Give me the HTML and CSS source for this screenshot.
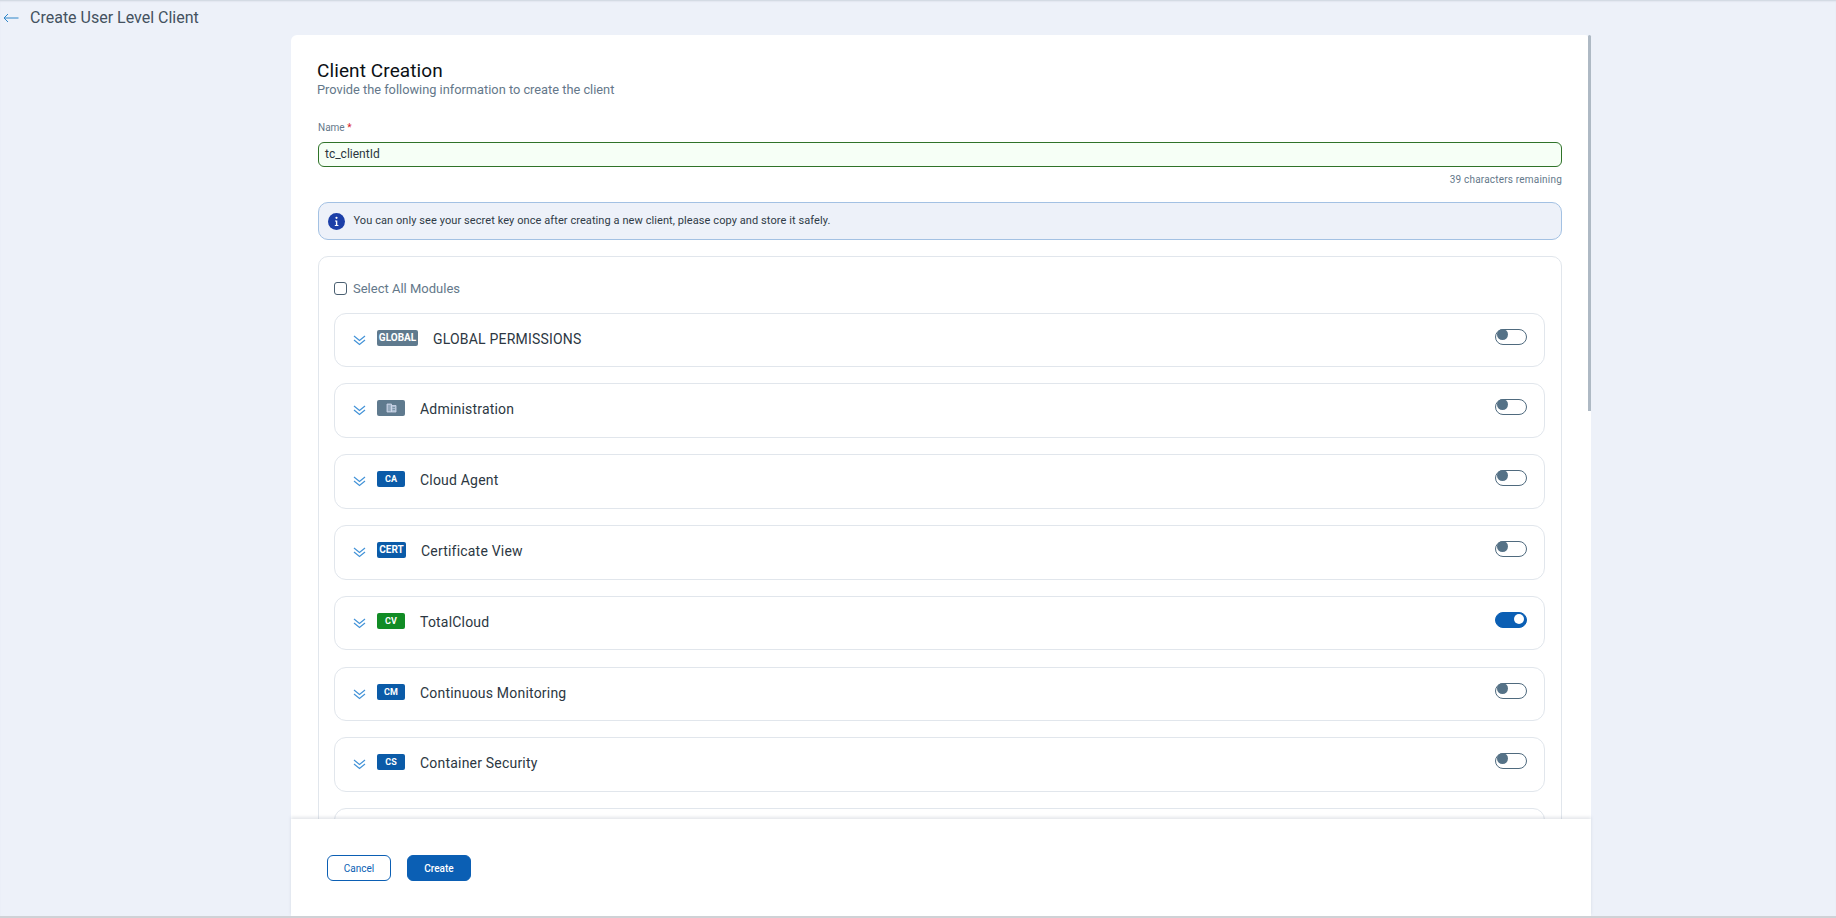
FILE: index.html
```html
<!DOCTYPE html>
<html lang="en">
<head>
<meta charset="utf-8">
<title>Create User Level Client</title>
<link rel="stylesheet" href="styles.css">
</head>
<body>
<div class="page">
  <header class="topbar">
    <svg class="back" width="16" height="10" viewBox="0 0 16 10"><path d="M15.500 5H1M5 1 1 5l4 4" fill="none" stroke="#2f86c9" stroke-width="1"/></svg>
    <span class="page-title">Create User Level Client</span>
  </header>
  <main class="card">
    <div class="scrollbar"></div>
    <div class="scroll">
      <h1 class="title">Client Creation</h1>
      <p class="subtitle">Provide the following information to create the client</p>
      <div class="field-label">Name <span class="req">*</span></div>
      <div class="input">tc_clientId</div>
      <div class="counter">39 characters remaining</div>
      <div class="info">
        <svg class="info-icon" width="17" height="17" viewBox="0 0 17 17"><circle cx="8.500" cy="8.500" r="8.500" fill="#1c3fa8"/><circle cx="8.500" cy="4.800" r="1.100" fill="#fff"/><path d="M7 7.400h2.300v4.600H10.400v1H6.800v-1h1.100V8.400H7z" fill="#fff"/></svg>
        <span class="info-text">You can only see your secret key once after creating a new client, please copy and store it safely.</span>
      </div>
      <section class="modules">
        <label class="select-all"><span class="checkbox"></span>Select All Modules</label>
        <div class="row">
          <svg class="chev" width="13" height="11" viewBox="0 0 13 11"><path d="M1 1l5.500 4.500L12 1M1 5l5.500 4.500L12 5" fill="none" stroke="#4393d8" stroke-width="1.200"/></svg>
          <span class="badge grey wide">GLOBAL</span>
          <span class="name name-wide">GLOBAL PERMISSIONS</span>
          <span class="toggle"></span>
        </div>
        <div class="row">
          <svg class="chev" width="13" height="11" viewBox="0 0 13 11"><path d="M1 1l5.500 4.500L12 1M1 5l5.500 4.500L12 5" fill="none" stroke="#4393d8" stroke-width="1.200"/></svg>
          <span class="badge grey"><svg width="11" height="10" viewBox="0 0 11 10"><path d="M1 1h4.500v8H1zM5.500 2.500H10V9H5.500z" fill="#a9bdd0" stroke="#cfd6ea" stroke-width=".8"/><path d="M2 3h2.500M2 5h2.500M2 7h2.500M6.500 4.500H9M6.500 6.500H9" stroke="#6a7f96" stroke-width=".7"/></svg></span>
          <span class="name">Administration</span>
          <span class="toggle"></span>
        </div>
        <div class="row">
          <svg class="chev" width="13" height="11" viewBox="0 0 13 11"><path d="M1 1l5.500 4.500L12 1M1 5l5.500 4.500L12 5" fill="none" stroke="#4393d8" stroke-width="1.200"/></svg>
          <span class="badge blue">CA</span>
          <span class="name">Cloud Agent</span>
          <span class="toggle"></span>
        </div>
        <div class="row">
          <svg class="chev" width="13" height="11" viewBox="0 0 13 11"><path d="M1 1l5.500 4.500L12 1M1 5l5.500 4.500L12 5" fill="none" stroke="#4393d8" stroke-width="1.200"/></svg>
          <span class="badge blue cert">CERT</span>
          <span class="name">Certificate View</span>
          <span class="toggle"></span>
        </div>
        <div class="row">
          <svg class="chev" width="13" height="11" viewBox="0 0 13 11"><path d="M1 1l5.500 4.500L12 1M1 5l5.500 4.500L12 5" fill="none" stroke="#4393d8" stroke-width="1.200"/></svg>
          <span class="badge green">CV</span>
          <span class="name">TotalCloud</span>
          <span class="toggle on"></span>
        </div>
        <div class="row">
          <svg class="chev" width="13" height="11" viewBox="0 0 13 11"><path d="M1 1l5.500 4.500L12 1M1 5l5.500 4.500L12 5" fill="none" stroke="#4393d8" stroke-width="1.200"/></svg>
          <span class="badge blue">CM</span>
          <span class="name">Continuous Monitoring</span>
          <span class="toggle"></span>
        </div>
        <div class="row">
          <svg class="chev" width="13" height="11" viewBox="0 0 13 11"><path d="M1 1l5.500 4.500L12 1M1 5l5.500 4.500L12 5" fill="none" stroke="#4393d8" stroke-width="1.200"/></svg>
          <span class="badge blue">CS</span>
          <span class="name">Container Security</span>
          <span class="toggle"></span>
        </div>
        <div class="row"></div>
      </section>
    </div>
    <footer class="footer">
      <button class="btn outline">Cancel</button>
      <button class="btn solid">Create</button>
    </footer>
  </main>
</div>
</body>
</html>
```

FILE: styles.css
```css
* { box-sizing: border-box; }
html, body { margin: 0; height: 100%; overflow: hidden; }
body { font-family: Roboto, "Liberation Sans", sans-serif; background: #edf1f9; color: #2f3b47; }
.page { height: 918px; display: flex; flex-direction: column; border-bottom: 2px solid #cfd2d6; box-shadow: inset 0 2px 2px -1px #ccd2dc; }
.topbar { height: 35px; flex: none; display: flex; align-items: center; padding-left: 3px; }
.back { margin-right: 11px; }
.page-title { font-size: 16px; color: #44525f; }
.card { position: relative; flex: 1; min-height: 0; width: 1300px; margin-left: 291px; background: #fff; border-radius: 6px 6px 0 0; display: flex; flex-direction: column; }
.scrollbar { position: absolute; top: 0; right: 0; width: 3px; height: 376px; background: #aeb9c4; border-radius: 2px 2px 0 0; z-index: 2; }
.scroll { flex: 1; min-height: 0; overflow: hidden; padding: 25px 29px 0 27px; }
.title { margin: 0 0 0 -1px; font-size: 19px; line-height: 22px; font-weight: 400; letter-spacing: .1px; color: #0b1015; }
.subtitle { margin: 0 0 0 -1px; font-size: 12.800px; line-height: 16px; color: #64788a; }
.field-label { margin-top: 24px; font-size: 10px; line-height: 12px; color: #64788a; }
.req { color: #d8232a; }
.input { margin-top: 8px; height: 25px; border: 1px solid #2f7329; border-radius: 6px; background: #f6fff6; padding-left: 6px; font-size: 12px; line-height: 23px; color: #2b3640; }
.counter { margin-top: 6px; text-align: right; font-size: 10px; line-height: 13px; letter-spacing: .2px; color: #64788a; }
.info { margin-top: 16px; height: 38px; border: 1px solid #a3c1e3; border-radius: 10px; background: #edf1f9; display: flex; align-items: center; padding-left: 9px; font-size: 11px; color: #2f3b47; letter-spacing: .08px; }
.info-icon { margin-right: 8.500px; flex: none; }
.info-text { margin-bottom: 2px; }
.modules { margin-top: 16px; border: 1px solid #e1e6ec; border-radius: 10px; padding: 25px 16px 0 15px; }
.select-all { display: flex; align-items: center; height: 13px; font-size: 13px; color: #64788a; margin-bottom: 17.600px; }
.checkbox { width: 13px; height: 13px; border: 1px solid #4b6072; border-radius: 3px; margin-right: 6px; }
.row { height: 54.600px; border: 1px solid #e1e6ec; border-radius: 12px; margin-bottom: 16.200px; display: flex; align-items: flex-start; padding: 16px 17px 0 18px; }
.chev { flex: none; margin: 5px 11px 0 0; }
.badge { flex: none; width: 28px; height: 16px; border-radius: 2px; color: #fff; font-size: 9px; font-weight: 700; line-height: 14px; text-align: center; display: flex; align-items: center; justify-content: center; }
.badge.wide { width: 41px; font-size: 10px; }
.badge.cert { width: 29px; font-size: 10px; }
.grey { background: #5f7a8e; }
.blue { background: #0b5ba8; }
.green { background: #118c25; }
.name { margin-left: 15px; font-size: 14px; line-height: 18px; letter-spacing: .2px; color: #2c3742; }
.toggle { margin: -1px 0 0 auto; width: 32px; height: 16px; border: 1px solid #4f6a7e; border-radius: 8px; position: relative; flex: none; }
.toggle::after { content: ""; position: absolute; left: 1px; top: -1px; width: 11px; height: 11px; border-radius: 50%; background: #557287; }
.toggle.on { background: #0b5fb4; border-color: #0b5fb4; }
.toggle.on::after { left: 18px; top: 1px; width: 10px; height: 10px; background: #fff; }
.footer { flex: none; height: 97px; background: #fff; box-shadow: 0 -2px 3px rgba(120,135,155,.2); display: flex; gap: 16px; align-items: flex-start; padding: 36px 0 0 36px; position: relative; z-index: 1; }
.btn { width: 64px; height: 26px; border-radius: 6px; font-family: inherit; font-size: 10px; padding: 0; }
.outline { background: #fff; border: 1px solid #0b5fb4; color: #0b5fb4; }
.solid { background: #0b5fb4; border: 1px solid #0b5fb4; color: #fff; font-weight: 500; }
```
